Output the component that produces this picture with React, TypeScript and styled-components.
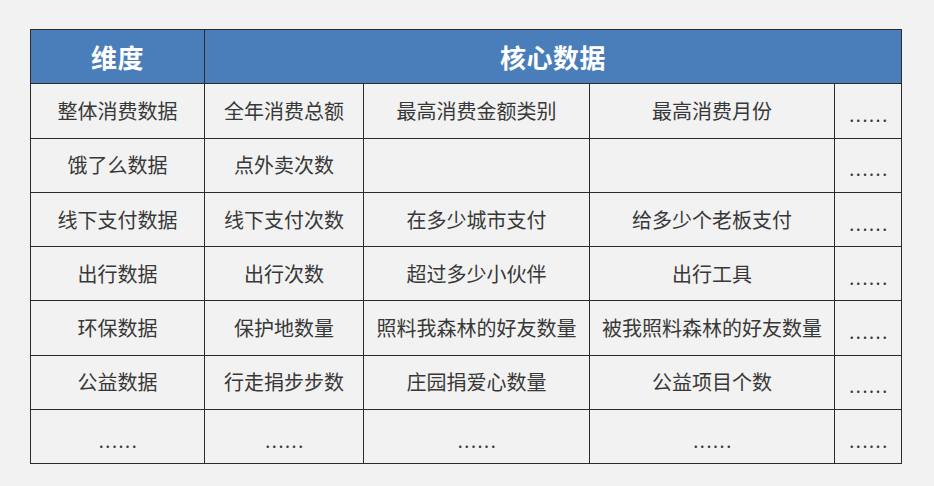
import styled, { createGlobalStyle } from "styled-components";

const GlobalStyle = createGlobalStyle`
  html, body {
    margin: 0;
    padding: 0;
    background: #f2f2f2;
  }
  body {
    font-family: "Noto Sans CJK SC", "Noto Sans", sans-serif;
  }
`;

const Page = styled.div`
  width: 934px;
  height: 486px;
  padding: 29px 0 0 30px;
  box-sizing: border-box;
  background: #f2f2f2;
`;

const Table = styled.table`
  border-collapse: collapse;
  table-layout: fixed;
  width: 871px;
  border: 1.5px solid #2b2b2b;
`;

const Row = styled.tr`
  height: 54.3px;
`;

const HeadCell = styled.th`
  background: #4a7ebb;
  color: #ffffff;
  font-size: 26px;
  line-height: 30px;
  font-weight: 700;
  padding: 0;
  text-align: center;
  border: 1.5px solid #2b2b2b;
  letter-spacing: 0.5px;
`;

const Cell = styled.td<{ $dots?: boolean }>`
  padding: ${(p) => (p.$dots ? "6px 0 0 2px" : "0")};
  text-align: center;
  font-size: ${(p) => (p.$dots ? "18px" : "20px")};
  letter-spacing: ${(p) => (p.$dots ? "1.6px" : "0")};
  line-height: 24px;
  color: #383838;
  border: 1.5px solid #2b2b2b;
  white-space: nowrap;
  vertical-align: middle;
`;

const widths = [174, 159, 226, 245, 67];

const rows: string[][] = [
  ["整体消费数据", "全年消费总额", "最高消费金额类别", "最高消费月份", "......"],
  ["饿了么数据", "点外卖次数", "", "", "......"],
  ["线下支付数据", "线下支付次数", "在多少城市支付", "给多少个老板支付", "......"],
  ["出行数据", "出行次数", "超过多少小伙伴", "出行工具", "......"],
  ["环保数据", "保护地数量", "照料我森林的好友数量", "被我照料森林的好友数量", "......"],
  ["公益数据", "行走捐步步数", "庄园捐爱心数量", "公益项目个数", "......"],
  ["......", "......", "......", "......", "......"],
];

export default function App() {
  return (
    <Page>
      <GlobalStyle />
      <Table>
        <colgroup>
          {widths.map((w, i) => (
            <col key={i} style={{ width: w }} />
          ))}
        </colgroup>
        <thead>
          <Row>
            <HeadCell>维度</HeadCell>
            <HeadCell colSpan={4}>核心数据</HeadCell>
          </Row>
        </thead>
        <tbody>
          {rows.map((r, i) => (
            <Row key={i}>
              {r.map((c, j) => (
                <Cell key={j} $dots={c === "......"}>
                  {c}
                </Cell>
              ))}
            </Row>
          ))}
        </tbody>
      </Table>
    </Page>
  );
}
